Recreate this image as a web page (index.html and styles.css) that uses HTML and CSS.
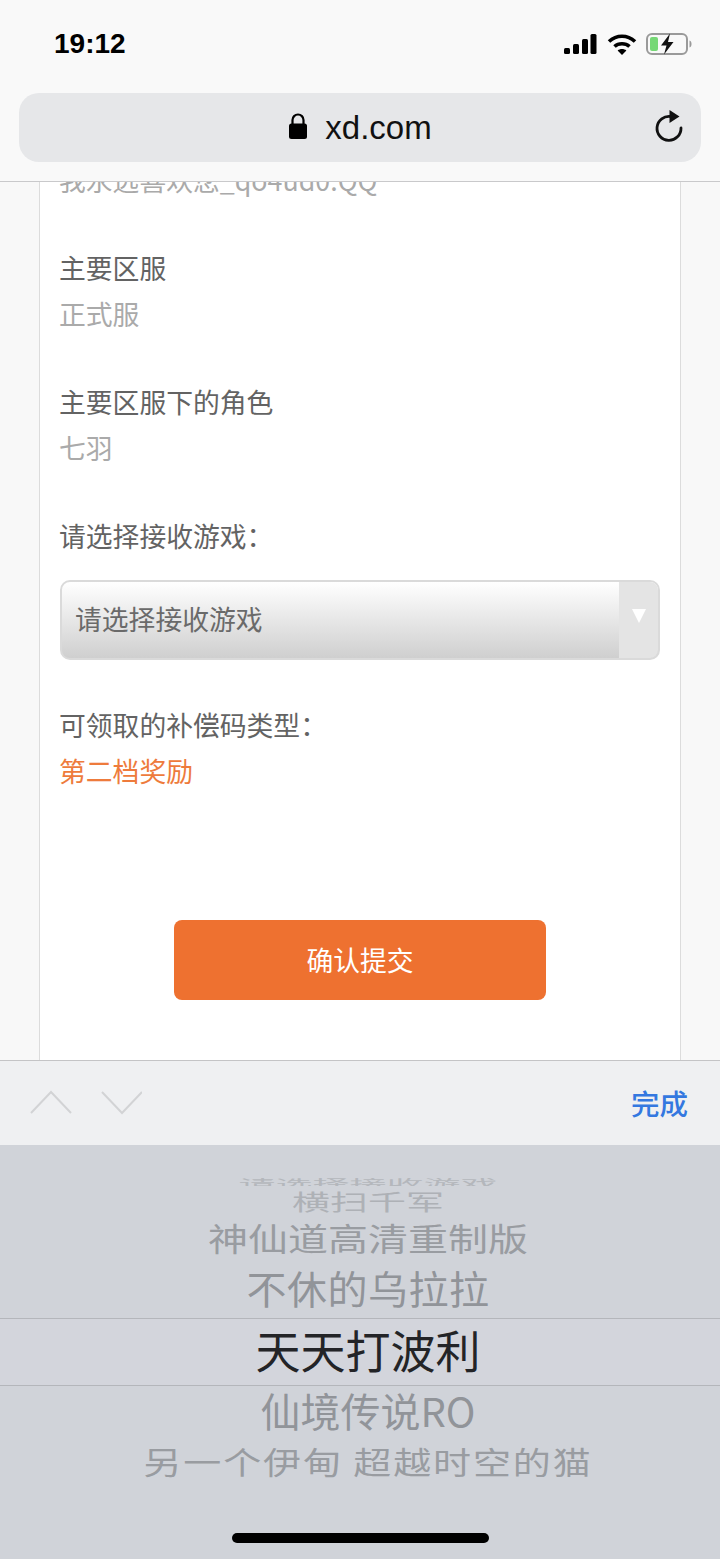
FILE: index.html
```html
<!DOCTYPE html>
<html lang="zh-CN">
<head>
<meta charset="utf-8">
<title>xd.com</title>
<link rel="stylesheet" href="styles.css">
</head>
<body>
<div class="screen">
  <header class="chrome">
    <div class="status">
      <span class="time">19:12</span>
      <div class="status-icons">
        <svg class="ic-signal" width="34" height="22" viewBox="0 0 34 22"><rect x="1" y="15" width="6" height="6" rx="1.5"/><rect x="10" y="11" width="6" height="10" rx="1.5"/><rect x="19" y="6" width="6" height="15" rx="1.5"/><rect x="27.5" y="1" width="6" height="20" rx="1.5"/></svg>
        <svg class="ic-wifi" width="30" height="22" viewBox="0 0 30 22"><path d="M2 8.5C9.5 1.5 20.5 1.5 28 8.5" fill="none" stroke="#000" stroke-width="3.6"/><path d="M7.5 13.5C11.5 9.8 18.5 9.8 22.5 13.5" fill="none" stroke="#000" stroke-width="3.6"/><path d="M15 22L10.6 17.4C13 15.4 17 15.4 19.4 17.4Z"/></svg>
        <svg class="ic-batt" width="46" height="22" viewBox="0 0 46 22"><rect x="1" y="1" width="40" height="20" rx="5" fill="none" stroke="#9a9a9a" stroke-width="2"/><rect x="4" y="4" width="8" height="14" rx="2" fill="#76d876"/><path d="M43.500 7.500c1.500.4 2 1.800 2 3.500s-.5 3.100-2 3.500z" fill="#9a9a9a"/><path d="M24 0.500L15 12.500H20.500L18 21.500L27.500 9H22Z" fill="#111"/></svg>
      </div>
    </div>
    <div class="urlbar">
      <div class="url">
        <svg width="20" height="28" viewBox="0 0 20 28"><path d="M4.500 12V8a5.500 5.500 0 0 1 11 0v4" fill="none" stroke="#000" stroke-width="2.200"/><rect x="1" y="11.500" width="18" height="15.500" rx="2.500"/></svg>
        <span>xd.com</span>
      </div>
      <svg class="reload" width="30" height="36" viewBox="0 0 30 36"><path d="M17 7.500A12 12 0 1 0 27 19" fill="none" stroke="#111" stroke-width="2.800" stroke-linecap="round"/><path d="M15.500 1L25.500 7.500L15.500 14Z" fill="#111"/></svg>
    </div>
  </header>

  <main class="page">
    <div class="card">
      <p class="value first">我永远喜欢您_qo4ud0.QQ</p>
      <section class="group">
        <p class="label">主要区服</p>
        <p class="value">正式服</p>
      </section>
      <section class="group">
        <p class="label">主要区服下的角色</p>
        <p class="value">七羽</p>
      </section>
      <section class="group">
        <p class="label">请选择接收游戏：</p>
        <div class="select">
          <span class="select-text">请选择接收游戏</span>
          <span class="select-arrow"><i></i></span>
        </div>
      </section>
      <section class="group">
        <p class="label">可领取的补偿码类型：</p>
        <p class="value accent">第二档奖励</p>
      </section>
      <button class="submit" type="button">确认提交</button>
    </div>
  </main>

  <div class="toolbar">
    <svg class="chev" width="112" height="26" viewBox="0 0 112 26"><path d="M1 24L21 3L41 24M72 3L92 24L112 3" fill="none" stroke="#d2d3d5" stroke-width="2"/></svg>
    <span class="done">完成</span>
  </div>

  <div class="picker">
    <div class="row r0"><span>请选择接收游戏</span></div>
    <div class="row r1"><span>横扫千军</span></div>
    <div class="row r2"><span>神仙道高清重制版</span></div>
    <div class="row r3"><span>不休的乌拉拉</span></div>
    <div class="row r4"><span>天天打波利</span></div>
    <div class="row r5"><span>仙境传说RO</span></div>
    <div class="row r6"><span>另一个伊甸 超越时空的猫</span></div>
    <div class="home"></div>
  </div>
</div>
</body>
</html>
```
FILE: styles.css
```css
* { box-sizing: border-box; }
html, body { margin: 0; padding: 0; }
body {
  font-family: "Noto Sans CJK SC", "Noto Sans", sans-serif;
  background: #f8f8f8;
}
p { margin: 0; }

.screen {
  width: 720px;
  height: 1559px;
  display: flex;
  flex-direction: column;
  overflow: hidden;
}

/* browser chrome */
.chrome {
  height: 182px;
  flex: none;
  background: #f9f9f9;
  border-bottom: 1px solid #c9c9cb;
  padding: 0 19px;
}
.status {
  height: 93px;
  padding: 22px 9px 0 35px;
  display: flex;
  justify-content: space-between;
  align-items: flex-start;
}
.time {
  font-family: "Liberation Sans", sans-serif;
  font-size: 28px;
  font-weight: 700;
  line-height: 44px;
  color: #000;
}
.status-icons {
  display: flex;
  align-items: center;
  gap: 9px;
  margin-top: 11px;
}
.ic-signal { margin-right: 1px; }
.urlbar {
  position: relative;
  height: 69px;
  border-radius: 20px;
  background: #e6e7e9;
  display: flex;
  align-items: center;
  justify-content: center;
}
.url {
  display: flex;
  align-items: center;
  gap: 17px;
  font-family: "Liberation Sans", sans-serif;
  font-size: 33px;
  color: #111;
}
.url svg { margin-top: -3px; }
.reload { position: absolute; right: 17px; top: 16px; }

/* page */
.page {
  flex: 1;
  min-height: 0;
  overflow: hidden;
  background: #f8f8f8;
}
.card {
  width: 642px;
  min-height: 1000px;
  margin: -26px 0 0 39px;
  padding: 0 20px;
  background: #fff;
  border: 1px solid #dcdcdc;
  font-size: 26.8px;
  line-height: 46px;
}
.group { margin-top: 42px; }
.label { color: #636363; margin-left: -1px; }
.value { color: #aaaaaa; margin-left: -1px; }
.value.first { height: 46px; }
.value.accent { color: #ee7b3c; }

.select {
  height: 80px;
  margin-top: 21px;
  border: 2px solid #dadada;
  border-radius: 10px;
  background: linear-gradient(#ffffff, #cfcfcf);
  display: flex;
  align-items: center;
  justify-content: space-between;
  overflow: hidden;
}
.select-text {
  padding-left: 14px;
  color: #6a6a6a;
  margin-left: -1px;
  margin-top: -2px;
}
.select-arrow {
  width: 39px;
  height: 100%;
  background: #e4e4e4;
  display: flex;
  justify-content: center;
  padding-top: 27px;
}
.select-arrow i {
  width: 0;
  height: 0;
  border-left: 7px solid transparent;
  border-right: 7px solid transparent;
  border-top: 14px solid #fff;
}

.group + .submit { margin-top: 126px; }
.submit {
  display: block;
  width: 372px;
  height: 80px;
  margin-left: 114px;
  border: 0;
  border-radius: 8px;
  background: #ee7130;
  color: #fff;
  font: inherit;
}

/* keyboard accessory */
.toolbar {
  height: 85px;
  flex: none;
  background: #eff0f2;
  border-top: 1px solid #c4c4c6;
  display: flex;
  align-items: center;
  justify-content: space-between;
  padding: 0 32px 0 30px;
}
.chev { margin-top: -3px; }
.done {
  font-size: 28.5px;
  font-weight: 500;
  color: #3478e0;
  margin-top: -1px;
}

/* picker */
.picker {
  flex: none;
  height: 414px;
  background: #d0d3d9;
  position: relative;
  padding-top: 33px;
  overflow: hidden;
}
.row {
  text-align: center;
  margin-left: 16px;
  overflow: hidden;
  white-space: nowrap;
  color: #8f9296;
}
.row span { display: inline-block; }
.r0 { height: 8px; line-height: 11px; font-size: 37px; color: #b4b7bc; }
.r0 span { transform: scaleY(.3); }
.r1 { height: 30px; line-height: 30px; font-size: 38px; color: #aeb1b6; }
.r1 span { transform: scaleY(.58); }
.r2 { height: 46px; margin-top: -2px; line-height: 46px; font-size: 40px; color: #999ca1; }
.r2 span { transform: scaleY(.8); }
.r3 { height: 56px; line-height: 56px; font-size: 40px; letter-spacing: .5px; color: #919499; }
.r3 span { transform: scaleY(.96); }
.r4 {
  height: 68px;
  margin-left: 0;
  padding-left: 16px;
  margin-top: 2px;
  line-height: 62px;
  font-size: 45px;
  color: #232427;
  background: #d3d5dc;
  border-top: 1px solid #b4b6bb;
  border-bottom: 1px solid #b4b6bb;
}
.r5 { height: 50px; line-height: 48px; font-size: 40px; color: #919499; }
.r6 { height: 52px; line-height: 52px; font-size: 38px; letter-spacing: 1.9px; margin-top: -1px; color: #999ca1; }
.r6 span { transform: scaleY(.82); }

.home {
  position: absolute;
  left: 232px;
  bottom: 16px;
  width: 257px;
  height: 10px;
  border-radius: 5px;
  background: #000;
}
```
